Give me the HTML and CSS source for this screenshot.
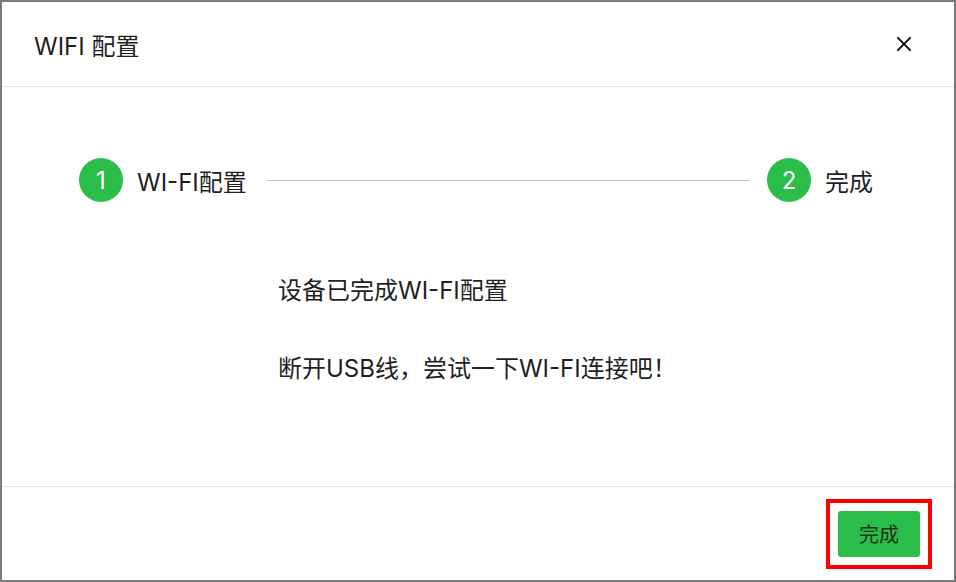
FILE: index.html
```html
<!DOCTYPE html>
<html lang="zh">
<head>
  <meta charset="UTF-8">
  <title>WIFI 配置</title>
  <link rel="stylesheet" href="styles.css">
</head>
<body>
  <div class="dialog">
    <div class="dialog-header">
      <span class="dialog-title">WIFI 配置</span>
      <button class="close-btn" aria-label="关闭">
        <svg width="16" height="16" viewBox="0 0 16 16"><path d="M2 2L14 14M14 2L2 14" stroke="#1c1c1c" stroke-width="2" stroke-linecap="square"/></svg>
      </button>
    </div>
    <div class="dialog-body">
      <div class="steps">
        <div class="step">
          <span class="step-num">1</span>
          <span class="step-label">WI-FI配置</span>
        </div>
        <div class="step-line"></div>
        <div class="step">
          <span class="step-num">2</span>
          <span class="step-label">完成</span>
        </div>
      </div>
      <div class="messages">
        <p>设备已完成WI-FI配置</p>
        <p>断开USB线，尝试一下WI-FI连接吧！</p>
      </div>
    </div>
    <div class="dialog-footer">
      <span class="highlight">
        <button class="btn-done">完成</button>
      </span>
    </div>
  </div>
</body>
</html>
```

FILE: styles.css
```css
html, body {
  margin: 0;
  padding: 0;
  background: #fff;
}
body {
  font-family: Inter, "Noto Sans CJK SC", sans-serif;
  color: #1f1f1f;
}

.dialog {
  width: 956px;
  height: 582px;
  box-sizing: border-box;
  border: 2px solid #7b7b7b;
  display: flex;
  flex-direction: column;
}

.dialog-header {
  height: 84px;
  flex: none;
  display: flex;
  align-items: center;
  justify-content: space-between;
  padding: 0 42px 0 32px;
  border-bottom: 1px solid #e6e6e6;
}
.dialog-title { font-size: 24px; }
.close-btn {
  border: 0;
  background: none;
  padding: 0;
  width: 16px;
  height: 16px;
  display: flex;
}

.dialog-body {
  flex: 1;
  border-bottom: 1px solid #e6e6e6;
}

.steps {
  display: flex;
  align-items: center;
  padding: 71px 81px 0 77px;
}
.step {
  display: flex;
  align-items: center;
  gap: 14px;
}
.step-num {
  width: 44px;
  height: 44px;
  border-radius: 50%;
  background: #2bbd49;
  color: #fff;
  font-size: 24px;
  display: flex;
  align-items: center;
  justify-content: center;
}
.step-label { font-size: 24px; }
.step-line {
  flex: 1;
  height: 1px;
  background: #c4c4c4;
  margin: 0 17px 0 20px;
}

.messages {
  padding: 0 0 0 276px;
  margin-top: 74px;
}
.messages p {
  margin: 0 0 48px;
  font-size: 24px;
  line-height: 30px;
}

.dialog-footer {
  height: 93px;
  flex: none;
  display: flex;
  align-items: center;
  justify-content: flex-end;
  padding-right: 22px;
}
.highlight {
  display: flex;
  padding: 8px;
  border: 4px solid #ff0000;
}
.btn-done {
  width: 82px;
  height: 46px;
  border: 0;
  border-radius: 3px;
  background: #2bbd49;
  color: #1b3320;
  font-family: inherit;
  font-size: 20px;
}
```
